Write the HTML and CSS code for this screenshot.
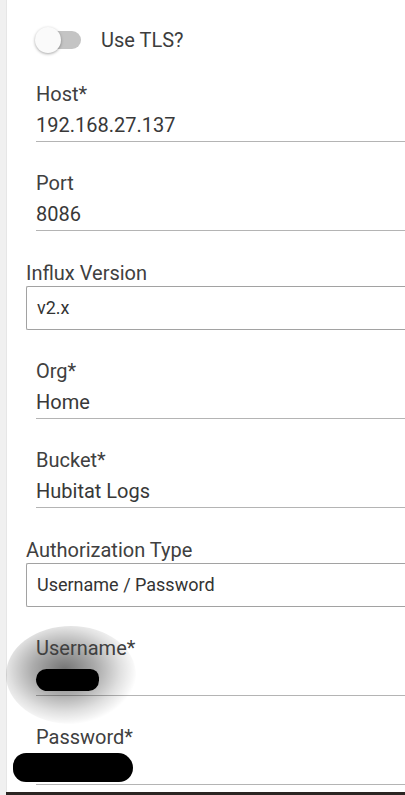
FILE: index.html
```html
<!DOCTYPE html>
<html lang="en">
<head>
  <meta charset="UTF-8">
  <meta name="viewport" content="width=device-width, initial-scale=1.0">
  <title>InfluxDB Logger Settings</title>
  <link rel="stylesheet" href="styles.css">
</head>
<body>
  <div class="panel">
    <div class="settings">
      <label class="toggle-row">
        <span class="switch"><span class="knob"></span></span>
        <span class="toggle-label">Use TLS?</span>
      </label>

      <div class="field">
        <div class="field-label">Host*</div>
        <div class="field-value">192.168.27.137</div>
      </div>

      <div class="field">
        <div class="field-label">Port</div>
        <div class="field-value">8086</div>
      </div>

      <div class="select-group">
        <div class="select-label">Influx Version</div>
        <div class="select-box">v2.x</div>
      </div>

      <div class="field">
        <div class="field-label">Org*</div>
        <div class="field-value">Home</div>
      </div>

      <div class="field">
        <div class="field-label">Bucket*</div>
        <div class="field-value">Hubitat Logs</div>
      </div>

      <div class="select-group">
        <div class="select-label">Authorization Type</div>
        <div class="select-box">Username / Password</div>
      </div>

      <div class="field redacted">
        <div class="smudge"></div>
        <div class="field-label">Username*</div>
        <div class="field-value"><span class="blot user-blot"></span></div>
      </div>

      <div class="field redacted">
        <div class="field-label">Password*</div>
        <div class="field-value"><span class="blot pass-blot"></span></div>
      </div>
    </div>
    <div class="bottom-edge"></div>
  </div>
</body>
</html>
```

FILE: styles.css
```css
html, body {
  margin: 0;
  padding: 0;
  background: #fff;
  overflow: hidden;
}
body {
  font-family: Roboto, "Liberation Sans", Arial, sans-serif;
  color: #3d3d3d;
  width: 405px;
  height: 795px;
}
.panel {
  height: 795px;
  display: flex;
  flex-direction: column;
  border-left: 6px solid #f0f0f0;
  box-shadow: inset 1px 0 0 #e6e6e6;
  box-sizing: border-box;
  overflow: hidden;
}
.settings {
  flex: 1;
  padding: 27px 0 0 20px;
}

/* toggle */
.toggle-row {
  display: flex;
  align-items: center;
  height: 26px;
  padding-left: 11px;
}
.switch {
  position: relative;
  width: 44px;
  height: 18px;
  border-radius: 9px;
  background: #c4c4c4;
}
.knob {
  position: absolute;
  left: -2px;
  top: -4px;
  width: 26px;
  height: 26px;
  border-radius: 50%;
  background: #fafafa;
  box-shadow: 0 1px 3px rgba(0, 0, 0, 0.35);
}
.toggle-label {
  margin-left: 20px;
  font-size: 20px;
  line-height: 24px;
  color: #3d3d3d;
}

/* text fields */
.field {
  position: relative;
  margin: 29px 0 0 10px;
  padding-bottom: 4px;
  border-bottom: 1px solid #b4b4b4;
}
.field-label,
.field-value {
  position: relative;
  font-size: 20px;
  line-height: 24px;
  z-index: 1;
}
.field-label {
  color: #404040;
}
.field-value {
  margin-top: 7px;
  height: 24px;
  color: #383838;
}

/* selects */
.select-group {
  margin-top: 30px;
}
.select-label {
  font-size: 20px;
  line-height: 24px;
  color: #404040;
  margin-bottom: 1px;
}
.select-box {
  height: 42px;
  border: 1px solid #a2a2a2;
  border-right: none;
  border-radius: 2px 0 0 2px;
  padding-left: 10px;
  font-size: 18px;
  line-height: 42px;
  color: #333;
}

/* redactions */
.blot {
  display: inline-block;
  position: relative;
  background: #000;
}
.user-blot {
  width: 63px;
  height: 22px;
  border-radius: 11px 9px 11px 12px;
  top: 2px;
}
.pass-blot {
  position: absolute;
  left: -23px;
  top: -3px;
  width: 120px;
  height: 29px;
  border-radius: 14px 16px 15px 14px;
}
.smudge {
  position: absolute;
  left: -30px;
  top: -10px;
  width: 130px;
  height: 98px;
  border-radius: 50%;
  background: radial-gradient(ellipse at 45% 45%, rgba(0, 0, 0, 0.55) 0%, rgba(0, 0, 0, 0.32) 32%, rgba(0, 0, 0, 0.12) 55%, rgba(0, 0, 0, 0.03) 68%, rgba(0, 0, 0, 0) 72%);
  z-index: 0;
}

.bottom-edge {
  height: 3px;
  background: #2b2522;
}
```
